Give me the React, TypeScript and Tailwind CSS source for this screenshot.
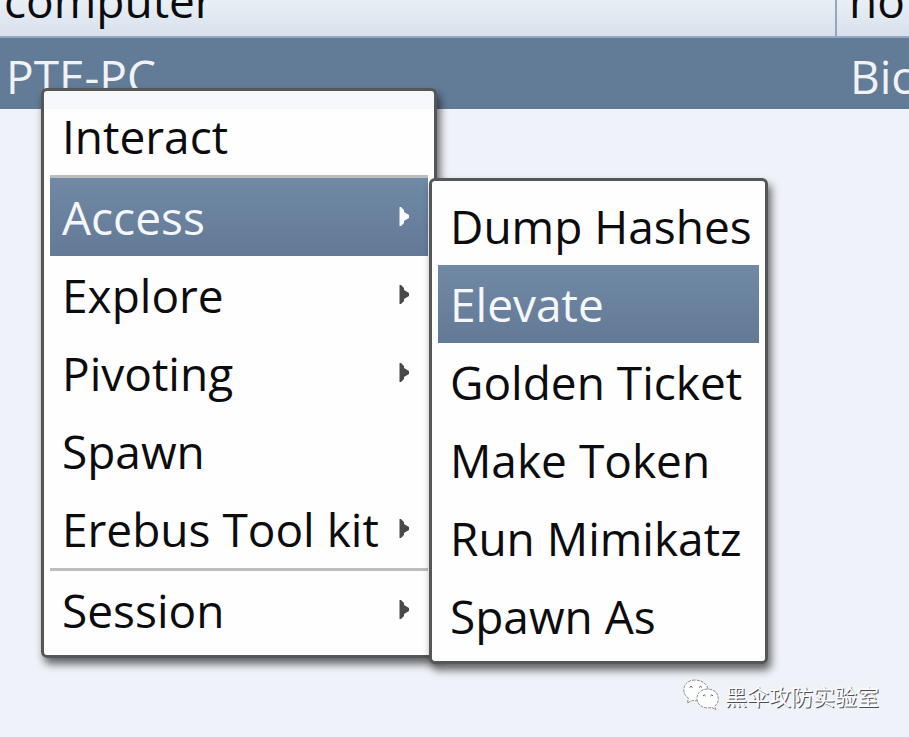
type Item = { label: string; submenu?: boolean; active?: boolean; divided?: boolean };

const mainItems: Item[] = [
  { label: "Interact" },
  { label: "Access", submenu: true, active: true, divided: true },
  { label: "Explore", submenu: true },
  { label: "Pivoting", submenu: true },
  { label: "Spawn" },
  { label: "Erebus Tool kit", submenu: true },
  { label: "Session", submenu: true, divided: true },
];

const accessItems: Item[] = [
  { label: "Dump Hashes" },
  { label: "Elevate", active: true },
  { label: "Golden Ticket" },
  { label: "Make Token" },
  { label: "Run Mimikatz" },
  { label: "Spawn As" },
];

function Menu({ label, items, place }: { label: string; items: Item[]; place: string }) {
  return (
    <ul
      role="menu"
      aria-label={label}
      className={`absolute rounded-md border-3 border-[#555657] p-[6px] shadow-[3px_6px_8px_rgba(0,0,0,0.6)] ${place}`}
    >
      {items.map((item) => (
        <li key={item.label} role="none" className={item.divided ? "border-t-3 border-[#bcbdbf]" : ""}>
          <button
            type="button"
            role="menuitem"
            aria-haspopup={item.submenu ? "menu" : undefined}
            className={`flex h-[78px] w-full items-center justify-between pr-[18px] pl-3 text-left text-[46px] leading-[64px] whitespace-nowrap ${
              item.active ? "bg-linear-to-b from-[#7089a5] to-[#637a97] text-[#f4f6f8]" : "text-[#0c0c0e]"
            }`}
          >
            {item.label}
            {item.submenu && (
              <svg width="11" height="20" viewBox="0 0 11 20" fill={item.active ? "#fafbfc" : "#48494b"} aria-hidden="true">
                <path d="M0.500 0H2L5 3V5L10 8V11L5 14V16L2 19H0.500Z" />
              </svg>
            )}
          </button>
        </li>
      ))}
    </ul>
  );
}

function WeChatMark() {
  return (
    <svg width="36" height="32" viewBox="0 0 36 32" fill="#fdfdfe" stroke="#8b8e92" strokeWidth="1" strokeDasharray="3 1" aria-hidden="true">
      <path d="M12 1C5 1 .8 5.500.8 11c0 3.500 1.800 6.200 4.700 8.200L4.300 24l5-2.700c1 .3 2.200.4 3.700.4 7 0 12-4.700 12-10.500S19 1 12 1Z" />
      <path d="M24.500 10C18 10 14 14.200 14 19.500S18.500 29 24.800 29c1.500 0 2.700-.2 3.900-.6l4 2.400-1-3.600c2.200-1.800 3.600-4.300 3.600-7.400C35.300 14.300 31 10 24.500 10Z" />
      <g fill="none" stroke="#55585c" strokeDasharray="none">
        <path d="M6.500 8.500q1.500-2.500 3 0M16 8.500q1.500-2.500 3 0M20 17q1.300-2.200 2.600 0M27.500 17q1.300-2.200 2.600 0" />
      </g>
    </svg>
  );
}

export default function App() {
  return (
    <main className="relative min-h-screen overflow-hidden bg-[#eff2f8] font-['Open_Sans','Noto_Sans',sans-serif]">
      <table className="w-full table-fixed border-collapse text-left text-[46px] leading-[48px]">
        <colgroup>
          <col />
          <col className="w-[73px]" />
        </colgroup>
        <thead>
          <tr className="bg-linear-to-b from-[#e9eff6] to-[#d7e0eb] text-[#0c0c0e]">
            <th scope="col" className="border-b-2 border-[#91a7c3] p-0 font-normal">
              <div className="flex h-9 items-end overflow-hidden pb-3 pl-1">computer</div>
            </th>
            <th scope="col" className="border-b-2 border-l-2 border-[#91a7c3] p-0 font-normal">
              <div className="flex h-9 items-end overflow-hidden pb-3 pl-3">no</div>
            </th>
          </tr>
        </thead>
        <tbody>
          <tr className="h-[72px] bg-[#627b97] text-[#f0f2f4]">
            <td className="overflow-hidden p-0 pt-1 pl-1.5 whitespace-nowrap">PTE-PC</td>
            <td className="overflow-hidden p-0 pt-1 pl-3.5 whitespace-nowrap">Bic</td>
          </tr>
        </tbody>
      </table>

      <Menu
        label="Session actions"
        items={mainItems}
        place="top-[88px] left-[41px] w-[396px] bg-linear-to-b from-[#f6f8fb] from-[18px] to-[#fefefe] to-[18px]"
      />
      <Menu label="Access" items={accessItems} place="top-[178px] left-[429px] w-[339px] bg-[#fefefe]" />

      <div className="absolute right-[30px] bottom-[26px] flex items-center gap-1.5">
        <WeChatMark />
        <span className="font-['Noto_Sans_CJK_SC',sans-serif] text-[22px] leading-8 text-[#fdfdfe] [text-shadow:1px_1px_0_#4b4e55]">
          黑伞攻防实验室
        </span>
      </div>
    </main>
  );
}
